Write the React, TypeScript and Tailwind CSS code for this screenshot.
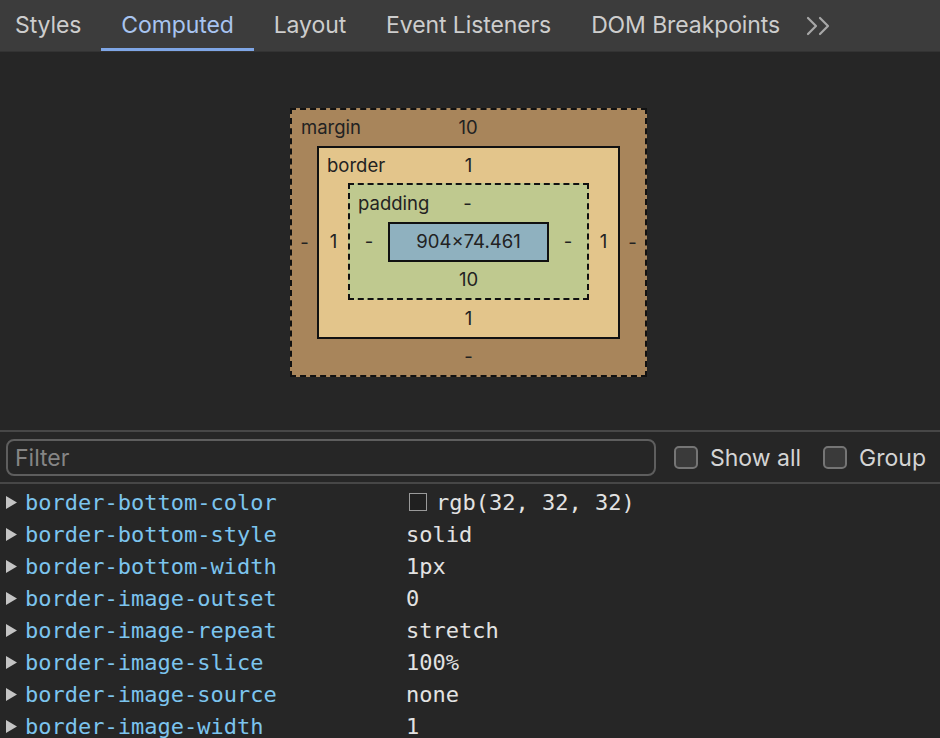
import React from "react";

const rows: { name: string; value: string; swatch?: boolean }[] = [
  { name: "border-bottom-color", value: "rgb(32, 32, 32)", swatch: true },
  { name: "border-bottom-style", value: "solid" },
  { name: "border-bottom-width", value: "1px" },
  { name: "border-image-outset", value: "0" },
  { name: "border-image-repeat", value: "stretch" },
  { name: "border-image-slice", value: "100%" },
  { name: "border-image-source", value: "none" },
  { name: "border-image-width", value: "1" },
];

const tabs = ["Styles", "Computed", "Layout", "Event Listeners", "DOM Breakpoints"];

export default function App() {
  return (
    <div className="w-[940px] h-[738px] overflow-hidden bg-[#262626] flex flex-col" style={{ fontFamily: "Inter, 'Noto Sans', sans-serif" }}>
      {/* Tab bar */}
      <div className="h-[52px] bg-[#3c3c3c] flex items-stretch shrink-0 border-b border-[#333]">
        <div className="flex items-stretch ml-[-5px]">
          {tabs.map((t, i) => (
            <div
              key={t}
              className={
                "relative px-[20px] flex items-center text-[23px] tracking-[-0.1px] " +
                (i === 1 ? "text-[#a8c4f0]" : "text-[#cdcdcd]")
              }
            >
              {t}
              {i === 1 && <div className="absolute left-0 right-0 bottom-0 h-[3px] bg-[#7fa6e6]" />}
            </div>
          ))}
          <div className="flex items-center pl-[5px]">
            <svg width="28" height="20" viewBox="0 0 28 20" fill="none" stroke="#a8a8a8" strokeWidth="2.2" strokeLinecap="round" strokeLinejoin="round">
              <path d="M3 2 L11 10 L3 18" />
              <path d="M15 2 L23 10 L15 18" />
            </svg>
          </div>
        </div>
      </div>

      {/* Box model */}
      <div className="h-[378px] shrink-0 flex justify-center pt-[56px]">
        <div className="ml-[-3px] w-[357px] h-[269px] border-2 border-dashed border-[#111] bg-[#a8855b] flex flex-col text-[18.5px] text-[#222]">
          <div className="relative h-[36px] flex items-center justify-center">
            <span className="absolute left-[9px]">margin</span>
            <span className="ml-[-1px]">10</span>
          </div>
          <div className="flex">
            <div className="w-[25px] flex items-center justify-center">-</div>
            <div className="w-[303px] h-[193px] border-2 border-[#111] bg-[#e3c58b] flex flex-col">
              <div className="relative h-[35px] flex items-center justify-center">
                <span className="absolute left-[8px]">border</span>
                <span>1</span>
              </div>
              <div className="flex">
                <div className="w-[29px] flex items-center justify-center">1</div>
                <div className="w-[241px] h-[117px] border-2 border-dashed border-[#111] bg-[#bfc98f] flex flex-col">
                  <div className="relative h-[37px] flex items-center justify-center">
                    <span className="absolute left-[8px]">padding</span>
                    <span className="ml-[-2px]">-</span>
                  </div>
                  <div className="flex">
                    <div className="w-[38px] flex items-center justify-center">-</div>
                    <div className="w-[161px] h-[40px] border-2 border-[#111] bg-[#8fb1bf] flex items-center justify-center">
                      904×74.461
                    </div>
                    <div className="w-[38px] flex items-center justify-center">-</div>
                  </div>
                  <div className="flex-1 flex items-center justify-center">10</div>
                </div>
                <div className="w-[29px] flex items-center justify-center">1</div>
              </div>
              <div className="flex-1 flex items-center justify-center">1</div>
            </div>
            <div className="w-[25px] flex items-center justify-center">-</div>
          </div>
          <div className="flex-1 flex items-center justify-center">-</div>
        </div>
      </div>

      {/* Filter row */}
      <div className="h-[54px] shrink-0 border-t-2 border-b-2 border-[#474747] flex items-center">
        <div className="ml-[6px] w-[650px] h-[37px] rounded-[8px] border-2 border-[#5e5e5e] flex items-center pl-[7px] pt-[3px] text-[23px] text-[#858585]">
          Filter
        </div>
        <div className="ml-[18px] flex items-center">
          <div className="w-[24px] h-[23px] rounded-[5px] border-2 border-[#757575] bg-[#3a3a3a]" />
          <span className="ml-[12px] pt-[2px] text-[23px] text-[#d4d4d4]">Show all</span>
        </div>
        <div className="ml-[22px] flex items-center">
          <div className="w-[24px] h-[23px] rounded-[5px] border-2 border-[#757575] bg-[#3a3a3a]" />
          <span className="ml-[12px] pt-[2px] text-[23px] text-[#d4d4d4]">Group</span>
        </div>
      </div>

      {/* Property rows */}
      <div className="flex flex-col pt-[2px]" style={{ fontFamily: "'DejaVu Sans Mono', 'Liberation Mono', monospace" }}>
        {rows.map((r) => (
          <div key={r.name} className="h-[32px] flex items-center text-[22px] shrink-0">
            <svg className="ml-[6px] shrink-0" width="11" height="13" viewBox="0 0 11 13">
              <path d="M0 0 L11 6.5 L0 13 Z" fill="#c4c4c4" />
            </svg>
            <span className="ml-[8px] w-[381px] text-[#7cc4ee]">{r.name}</span>
            {r.swatch && <span className="w-[18px] h-[18px] border border-[#9a9a9a] bg-[#202020] ml-[3px] mr-[9px]" />}
            <span className="text-[#e2e2e2]">{r.value}</span>
          </div>
        ))}
      </div>
    </div>
  );
}
